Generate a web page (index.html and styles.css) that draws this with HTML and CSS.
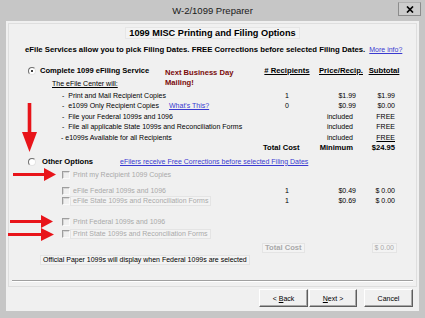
FILE: index.html
```html
<!DOCTYPE html>
<html>
<head>
<meta charset="utf-8">
<title>W-2/1099 Preparer</title>
<link rel="stylesheet" href="styles.css">
</head>
<body>
<div class="window">
  <div class="titlebar">
    <span class="title">W-2/1099 Preparer</span>
    <span class="close"><svg width="8" height="7" viewBox="0 0 8 7"><path d="M1 0.5 L7 6.5 M7 0.5 L1 6.5" stroke="#000" stroke-width="1.7"/></svg></span>
  </div>
  <div class="client">
    <div class="panel">
      <div class="heading"><span>1099 MISC Printing and Filing Options</span></div>
      <div class="subhead"><b>eFile Services allow you to pick Filing Dates. FREE Corrections before selected Filing Dates.</b><a class="link">More info?</a></div>

      <div class="row head-row">
        <div class="c1 opt1">
          <div class="opt1-main">
            <div class="radio-line"><span class="radio on"></span><b>Complete 1099 eFiling Service</b></div>
            <div class="center-line"><u>The eFile Center will:</u></div>
          </div>
          <div class="mailing">Next Business Day<br>Mailing!</div>
        </div>
        <div class="c2 hdr"><u>#&nbsp;Recipients</u></div>
        <div class="c3 hdr"><u>Price/Recip.</u></div>
        <div class="c4 hdr"><u>Subtotal</u></div>
      </div>

      <div class="row item"><div class="c1 itm">-&nbsp;&nbsp;Print and Mail Recipient Copies</div><div class="c2">1</div><div class="c3 num">$1.99</div><div class="c4 num">$1.99</div></div>
      <div class="row item"><div class="c1 itm"><span class="itm-text">-&nbsp;&nbsp;e1099 Only Recipient Copies</span><a class="link">What's This?</a></div><div class="c2">0</div><div class="c3 num">$0.99</div><div class="c4 num">$0.00</div></div>
      <div class="row item"><div class="c1 itm">-&nbsp;&nbsp;File your Federal 1099s and 1096</div><div class="c2"></div><div class="c3 num inc">included</div><div class="c4 num">FREE</div></div>
      <div class="row item"><div class="c1 itm">-&nbsp;&nbsp;File all applicable State 1099s and Reconciliation Forms</div><div class="c2"></div><div class="c3 num inc">included</div><div class="c4 num">FREE</div></div>
      <div class="row item"><div class="c1 itm itm5">- e1099s Available for all Recipients</div><div class="c2"></div><div class="c3 num inc">included</div><div class="c4 num"><u>FREE</u></div></div>
      <div class="row total"><div class="c1"></div><div class="c2 tl"><b>Total Cost</b></div><div class="c3 num min"><b>Minimum</b></div><div class="c4 num"><b>$24.95</b></div></div>

      <div class="opt2"><span class="radio"></span><b class="opt2-label">Other Options</b><a class="link">eFilers receive Free Corrections before selected Filing Dates</a></div>

      <div class="row cb-row r-print-rec">
        <div class="c1 cbc"><span class="lead"><svg class="arr a2" width="43" height="13" viewBox="0 0 43 13"><path d="M0 5 H31 V0 L43 6.5 L31 13 V8 H0 Z"/></svg></span><span class="cb"></span><span class="lbl dis">Print my Recipient 1099 Copies</span></div>
        <div class="c2"></div><div class="c3"></div><div class="c4"></div>
      </div>
      <div class="row cb-row r-efed">
        <div class="c1 cbc"><span class="lead"></span><span class="cb"></span><span class="lbl dis">eFile Federal 1099s and 1096</span></div>
        <div class="c2">1</div><div class="c3 num">$0.49</div><div class="c4 num">$ 0.00</div>
      </div>
      <div class="row cb-row">
        <div class="c1 cbc"><span class="lead"></span><span class="cb"></span><span class="lbl dis boxed">eFile State 1099s and Reconciliation Forms</span></div>
        <div class="c2">1</div><div class="c3 num">$0.69</div><div class="c4 num">$ 0.00</div>
      </div>
      <div class="row cb-row r-pfed">
        <div class="c1 cbc"><span class="lead"><svg class="arr a3" width="43" height="13" viewBox="0 0 43 13"><path d="M0 5 H31 V0 L43 6.5 L31 13 V8 H0 Z"/></svg></span><span class="cb"></span><span class="lbl dis">Print Federal 1099s and 1096</span></div>
        <div class="c2"></div><div class="c3"></div><div class="c4"></div>
      </div>
      <div class="row cb-row r-pstate">
        <div class="c1 cbc"><span class="lead"><svg class="arr a4" width="46" height="13" viewBox="0 0 46 13"><path d="M0 5 H33 V0 L46 6.5 L33 13 V8 H0 Z"/></svg></span><span class="cb"></span><span class="lbl dis boxed">Print State 1099s and Reconciliation Forms</span></div>
        <div class="c2"></div><div class="c3"></div><div class="c4"></div>
      </div>
      <div class="row total2"><div class="c1"></div><div class="c2 tl"><b class="dis gbox">Total Cost</b></div><div class="c3"></div><div class="c4 num"><span class="dis gbox">$ 0.00</span></div></div>

      <div class="note"><span class="gbox">Official Paper 1099s will display when Federal 1099s are selected</span></div>

      <div class="sep"></div>
    </div>
    <div class="buttons">
      <button class="btn">&lt; <u>B</u>ack</button>
      <button class="btn"><u>N</u>ext &gt;</button>
      <button class="btn cancel">Cancel</button>
    </div>
  </div>
  <svg class="arr-down" width="15" height="49" viewBox="0 0 15 49"><path d="M5.7 0 H9.3 V29 H15 L7.5 49 L0 29 H5.7 Z"/></svg>
</div>
</body>
</html>
```

FILE: styles.css
```css
* { box-sizing: border-box; margin: 0; padding: 0; }
body {
  margin: 0;
  width: 425px;
  height: 318px;
  overflow: hidden;
  background: #c5c5c5;
  font-family: "Liberation Sans", Arial, sans-serif;
  font-size: 7px;
  color: #000;
}
b { font-weight: bold; font-size: 7.6px; }

.window {
  position: relative;
  width: 425px;
  height: 318px;
  background: #c6c6c6;
  display: flex;
  flex-direction: column;
}

.titlebar {
  height: 21px;
  display: grid;
  grid-template-columns: 1fr auto 1fr;
  align-items: start;
}
.title {
  grid-column: 2;
  font-size: 9.5px;
  line-height: 22px;
  color: #1a1a1a;
}
.close {
  grid-column: 3;
  justify-self: end;
  margin: 2px 4px 0 0;
  width: 23px;
  height: 14px;
  border: 1px solid #8c8c8c;
  border-top-color: #b0b0b0;
  background: #cccccc;
  display: flex;
  align-items: center;
  justify-content: center;
}

.client {
  margin: 0 6px 7px;
  height: 290px;
  background: #f0f0f0;
  padding: 2px;
}
.panel {
  height: 264px;
  border: 1px solid #dedede;
  padding-top: 3px;
}

.heading {
  height: 12px;
  line-height: 10px;
  text-align: center;
  font-weight: bold;
  font-size: 9.2px;
}
.heading span {
  display: inline-block;
  padding: 0 3px;
  border: 1px solid #e6e6e6;
  background: #f3f3f3;
}

.subhead {
  margin-top: 6px;
  height: 10px;
  line-height: 10px;
  padding-left: 16px;
  display: flex;
  gap: 4px;
  white-space: nowrap;
}
.subhead b { font-size: 7.75px; }

.link {
  color: #3a3ad0;
  text-decoration: underline;
  white-space: nowrap;
}

.row {
  display: grid;
  grid-template-columns: 253px 50px 54px 36px;
  height: 10.5px;
  line-height: 10.5px;
  white-space: nowrap;
}
.c2 { text-align: center; }
.num { text-align: right; }
.c3.num { padding-right: 10px; }
.c4.num { padding-right: 7px; }
.c3.inc { padding-right: 13px; }
.c3.min { padding-right: 13px; }
.hdr { text-align: center; font-weight: bold; font-size: 7.7px; }
.c3.hdr { padding-left: 4px; }
.tl { text-align: left; padding-left: 1px; }

.head-row {
  margin-top: 11px;
  height: auto;
  line-height: 10px;
  align-items: start;
}
.opt1 { display: flex; }
.opt1-main { width: 156px; }
.radio-line {
  height: 10px;
  display: flex;
  align-items: center;
  padding-left: 19px;
  gap: 4px;
}
.center-line {
  margin-top: 3px;
  height: 10px;
  padding-left: 43px;
}
.mailing {
  padding-top: 2px;
  line-height: 10px;
  color: #7a0a0a;
  font-weight: bold;
  font-size: 7.6px;
}

.radio {
  display: inline-block;
  width: 8px;
  height: 8px;
  border-radius: 50%;
  border: 1px solid;
  border-color: #6e6e6e #e4e4e4 #e4e4e4 #6e6e6e;
  background: #fff;
  position: relative;
  flex: none;
}
.radio.on::after {
  content: "";
  position: absolute;
  left: 2px;
  top: 2px;
  width: 2px;
  height: 2px;
  background: #000;
  border-radius: 50%;
}

.head-row + .item { margin-top: 1.5px; }
.itm { padding-left: 53px; }
.itm5 { padding-left: 52px; }
.itm-text { display: inline-block; width: 107px; }

.total { height: 10px; line-height: 10px; }

.opt2 {
  margin-top: 3.5px;
  height: 10px;
  line-height: 10px;
  display: flex;
  align-items: center;
  padding-left: 19px;
  white-space: nowrap;
}
.opt2 .radio { margin-right: 6px; }
.opt2-label { display: inline-block; width: 78px; }

.cb-row { height: 10.5px; }
.cbc { display: flex; align-items: center; }
.lead { width: 53px; height: 10px; flex: none; }
.arr { display: block; fill: #e8141a; margin-top: -1.5px; }
.a2 { margin-left: 4px; }
.a3 { margin-left: 1px; }
.a4 { margin-left: -1px; margin-top: -0.5px; }
.cb {
  width: 8px;
  height: 8px;
  flex: none;
  border: 1px solid;
  border-color: #9e9e9e #fafafa #fafafa #9e9e9e;
  background: #f0f0f0;
  box-shadow: inset 1px 1px 0 #d6d6d6;
}
.lbl {
  display: inline-block;
  height: 10px;
  line-height: 8px;
  padding: 0 2px;
  border: 1px solid transparent;
}
.boxed, .gbox {
  border: 1px solid #e4e4e4;
  background: #f3f3f3;
}
.gbox { display: inline-block; padding: 0 2px; line-height: 8px; height: 10px; }
.dis { color: #a9a9a9; }

.r-print-rec { margin-top: 3px; }
.r-efed { margin-top: 5.5px; }
.r-pfed { margin-top: 10px; }
.r-pstate { margin-top: 1.5px; }
.total2 { margin-top: 3.5px; height: 10px; line-height: 10px; }
.total2 .tl { padding-left: 0; }
.total2 .c4.num { padding-right: 5px; }

.note {
  margin-top: 2px;
  height: 10px;
  padding-left: 31px;
}
.note .gbox { color: #000; }

.sep {
  margin: 15.5px 3px 0;
  border-top: 1px solid #a0a0a0;
  border-bottom: 1px solid #ffffff;
}

.buttons {
  margin-top: 2px;
  display: flex;
  justify-content: flex-end;
  gap: 1px;
  padding-right: 4px;
}
.btn {
  width: 49px;
  height: 18px;
  font-family: "Liberation Sans", Arial, sans-serif;
  font-size: 7px;
  color: #000;
  background: #f0f0f0;
  border: 1px solid;
  border-color: #ffffff #5e5e5e #5e5e5e #ffffff;
  box-shadow: inset -1px -1px 0 #a8a8a8;
}
.btn + .btn { width: 48px; }
.btn.cancel { width: 49px; margin-left: 6px; }

.arr-down {
  position: absolute;
  left: 22px;
  top: 103px;
  fill: #e8141a;
}
```
